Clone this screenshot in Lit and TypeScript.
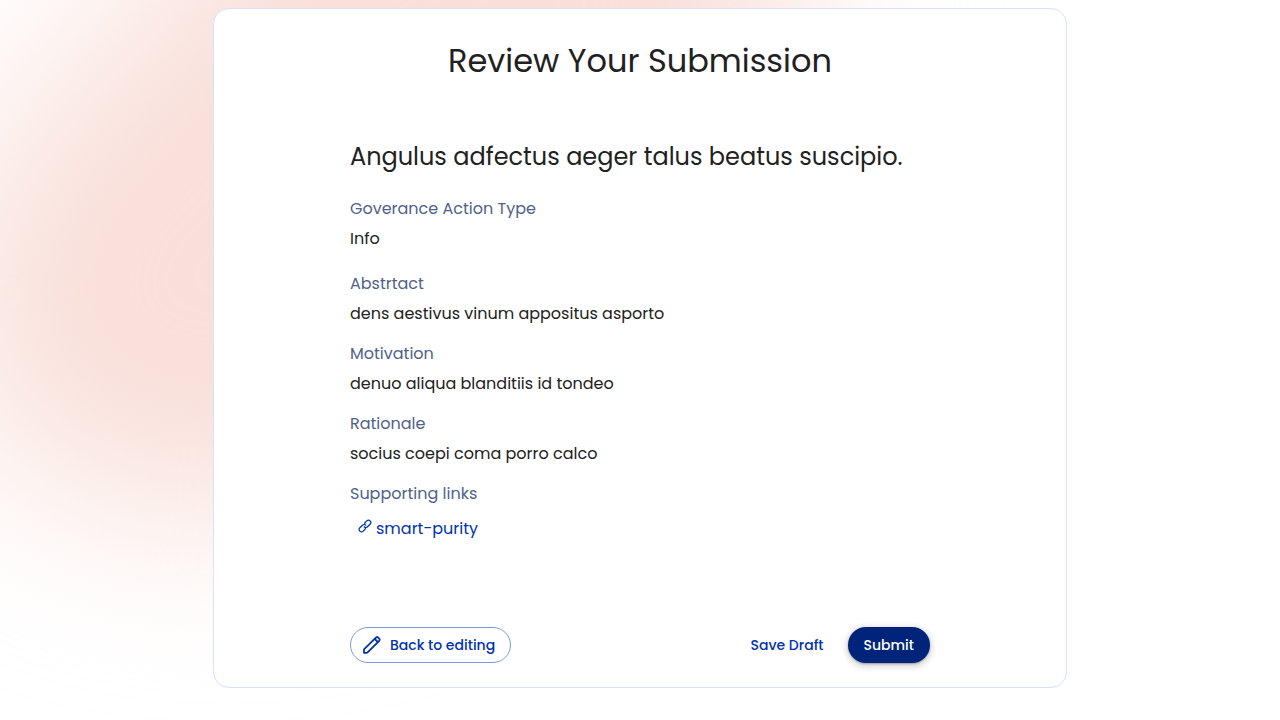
import { LitElement, html, css, svg } from "lit";
import { customElement, property, state } from "lit/decorators.js";

interface Detail {
  label: string;
  value: string;
}

const linkIcon = svg`
  <svg class="link-icon" viewBox="0 0 16 16" aria-hidden="true">
    <g transform="rotate(-45 8 8)" fill="none" stroke="currentColor" stroke-width="1.4" stroke-linecap="round">
      <path d="M6.4 10.2 A2.7 2.7 0 0 1 5 10.7 H2.4 A2.7 2.7 0 0 1 2.4 5.3 H6.6 A2.7 2.7 0 0 1 9.3 8" />
      <path d="M9.6 5.8 A2.7 2.7 0 0 1 11 5.3 H13.6 A2.7 2.7 0 0 1 13.6 10.7 H9.4 A2.7 2.7 0 0 1 6.7 8" />
    </g>
  </svg>`;

const pencilIcon = svg`
  <svg class="pencil-icon" viewBox="0 0 20 20" aria-hidden="true">
    <g fill="none" stroke="currentColor" stroke-width="1.8" stroke-linejoin="round" stroke-linecap="round">
      <path d="M2.2 14.2 L13.9 2.6 Q15.1 1.5 16.2 2.6 L17.2 3.6 Q18.3 4.8 17.2 5.9 L5.6 17.4 Q5.2 17.8 4.6 17.8 H2 V14.8 Z" />
      <path d="M12.8 4 L15.9 7.1" />
    </g>
  </svg>`;

@customElement("detail-item")
export class DetailItem extends LitElement {
  @property() label = "";

  static styles = css`
    :host {
      display: block;
    }
    .label,
    .value {
      margin: 0;
      font-size: 16px;
      font-weight: 400;
      line-height: 24px;
    }
    .label {
      color: #506288;
      margin-bottom: 6px;
    }
    .value {
      color: #212121;
    }
  `;

  render() {
    return html`
      <h3 class="label">${this.label}</h3>
      <div class="value"><slot></slot></div>
    `;
  }
}

@customElement("app-root")
export class AppRoot extends LitElement {
  @state() private actionType = "Info";

  @state() private details: Detail[] = [
    { label: "Abstrtact", value: "dens aestivus vinum appositus asporto" },
    { label: "Motivation", value: "denuo aliqua blanditiis id tondeo" },
    { label: "Rationale", value: "socius coepi coma porro calco" },
  ];

  static styles = css`
    :host {
      display: block;
      position: relative;
      box-sizing: border-box;
      min-height: 100vh;
      padding: 8px 0;
      overflow: hidden;
      background: #fff;
      color: #212121;
      font-family: Poppins, Inter, sans-serif;
    }
    .glow {
      position: absolute;
      top: 0;
      left: 0;
      width: 1280px;
      height: 800px;
      overflow: visible;
      pointer-events: none;
    }
    .card {
      position: relative;
      box-sizing: border-box;
      width: calc(200% / 3);
      margin: 0 auto;
      padding: 28px 24px 24px;
      border: 1px solid #d6e2ff;
      border-radius: 16px;
      background: #fff;
    }
    .title {
      margin: 0 0 54px;
      font-size: 32px;
      font-weight: 400;
      line-height: 48px;
      text-align: center;
    }
    .content {
      max-width: 580px;
      margin: 0 auto;
    }
    .name {
      margin: 0 0 22px;
      font-size: 24px;
      font-weight: 400;
      line-height: 36px;
    }
    .details {
      display: flex;
      flex-direction: column;
      gap: 16px;
    }
    .type {
      margin-bottom: 5px;
    }
    .link {
      display: inline-flex;
      gap: 4px;
      margin: 5px 0 0 8px;
      color: #0033ad;
      text-decoration: none;
    }
    .link-icon {
      width: 14px;
      height: 14px;
      margin-top: 2px;
    }
    .actions {
      display: flex;
      justify-content: space-between;
      margin-top: 86px;
    }
    .group {
      display: flex;
      gap: 8px;
    }
    .button {
      display: inline-flex;
      align-items: center;
      gap: 8px;
      height: 36px;
      padding: 0 16px;
      border: none;
      border-radius: 18px;
      background: none;
      color: #0033ad;
      font-family: inherit;
      font-size: 14px;
      font-weight: 500;
      line-height: 24px;
      cursor: pointer;
    }
    .outlined {
      padding: 0 15px 0 11px;
      border: 1px solid #8099d6;
    }
    .filled {
      background: #00247a;
      color: #fff;
      box-shadow:
        0 1px 2px 0 rgba(0, 0, 0, 0.3),
        0 2px 6px 2px rgba(0, 0, 0, 0.15);
    }
    .pencil-icon {
      width: 20px;
      height: 20px;
    }
  `;

  render() {
    return html`
      <svg class="glow" viewBox="0 0 1280 800" aria-hidden="true">
        <defs>
          <filter id="soften" x="-50%" y="-50%" width="200%" height="200%" color-interpolation-filters="sRGB">
            <feGaussianBlur stdDeviation="88" />
          </filter>
        </defs>
        <path
          fill="#f9dfd9"
          filter="url(#soften)"
          d="M140 0 L10 130 Q-80 250 -50 370 Q0 500 213 520 Q500 510 700 250 L810 -20 Q820 -200 600 -240 Q320 -240 140 0Z"
        />
      </svg>
      <main class="card">
        <h1 class="title">Review Your Submission</h1>
        <div class="content">
          <h2 class="name">Angulus adfectus aeger talus beatus suscipio.</h2>
          <div class="details">
            <detail-item class="type" label="Goverance Action Type">${this.actionType}</detail-item>
            ${this.details.map((d) => html`<detail-item label=${d.label}>${d.value}</detail-item>`)}
            <detail-item label="Supporting links">
              <a class="link" href="#smart-purity">${linkIcon}<span>smart-purity</span></a>
            </detail-item>
          </div>
          <div class="actions">
            <button class="button outlined" type="button">${pencilIcon}Back to editing</button>
            <div class="group">
              <button class="button" type="button">Save Draft</button>
              <button class="button filled" type="submit">Submit</button>
            </div>
          </div>
        </div>
      </main>
    `;
  }
}
